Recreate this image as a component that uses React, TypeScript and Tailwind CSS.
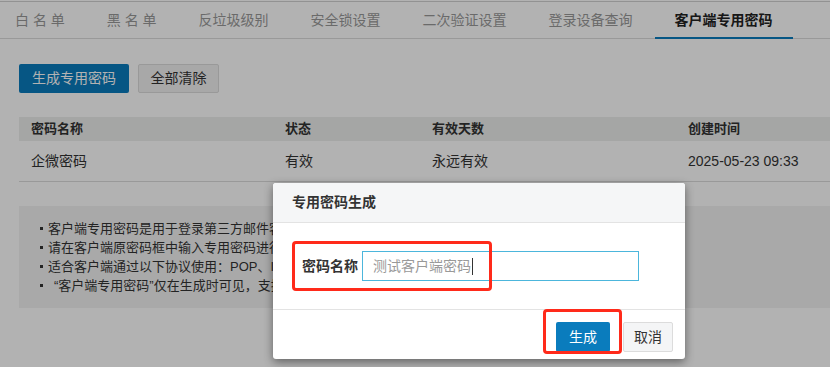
const TABS = ["白 名 单", "黑 名 单", "反垃圾级别", "安全锁设置", "二次验证设置", "登录设备查询", "客户端专用密码"];

const NOTES = [
  "客户端专用密码是用于登录第三方邮件客户端的专用密码；",
  "请在客户端原密码框中输入专用密码进行登录；",
  "适合客户端通过以下协议使用：POP、IMAP、SMTP；",
  "“客户端专用密码”仅在生成时可见，支持删除。",
];

function Tabs() {
  return (
    <div className="mt-px flex h-[38px] border-y border-[#dcdcdc] border-t-[#d2d2d2] pl-[15px] gap-[42px]">
      {TABS.map((t, i) => {
        const active = i === TABS.length - 1;
        return (
          <div
            key={t}
            className={
              active
                ? "relative flex items-center text-[14px] font-bold text-[#222]"
                : "flex items-center text-[14px] text-[#999]"
            }
          >
            {t}
            {active && <div className="absolute -left-5 -right-5 bottom-[-1px] h-[2px] bg-[#0a7cbd]" />}
          </div>
        );
      })}
    </div>
  );
}

function Table() {
  return (
    <div className="mt-[24px] text-[13px] text-[#333]">
      <div className="grid h-6 grid-cols-[254px_147px_256px_1fr] items-center bg-[#eceeec] font-bold">
        <div className="pl-3">密码名称</div>
        <div className="pl-3">状态</div>
        <div className="pl-3">有效天数</div>
        <div className="pl-3">创建时间</div>
      </div>
      <div className="grid h-[41px] grid-cols-[254px_147px_256px_1fr] items-center border-b border-[#dcdcdc] text-[14px]">
        <div className="pl-3">企微密码</div>
        <div className="pl-3">有效</div>
        <div className="pl-3">永远有效</div>
        <div className="pl-3">2025-05-23 09:33</div>
      </div>
    </div>
  );
}

function Notes() {
  return (
    <div className="mt-6 bg-[#f3f3f3] pb-[13px] pt-[13px] pl-[21px] text-[13px] leading-[19px] text-[#333]">
      {NOTES.map((n, i) => (
        <div key={n} className="flex items-center">
          <span className="mr-[5px] h-[3px] w-[3px] bg-[#333]" />
          <span className={i === 3 ? "ml-[6px]" : ""}>{n}</span>
        </div>
      ))}
    </div>
  );
}

function Modal() {
  return (
    <div className="absolute left-[273px] top-[183px] w-[412px] rounded-[3px] bg-white shadow-[0_3px_10px_rgba(0,0,0,0.45)]">
      <div className="flex h-[40px] items-center rounded-t-[3px] border-b border-[#e3e3e3] bg-[#f5f6f7] pl-[19px] text-[14px] font-bold text-[#333]">
        专用密码生成
      </div>
      <div className="relative flex h-[86px] items-center pl-[29px]">
        <span className="mr-[4px] text-[14px] font-bold text-[#333]">密码名称</span>
        <div className="flex h-[30px] w-[277px] items-center border border-[#4cb6dc] pl-[10px] text-[14px] text-[#999]">
          测试客户端密码
          <span className="ml-px h-[17px] w-px bg-[#333]" />
        </div>
        <div className="pointer-events-none absolute left-[19px] top-[18px] h-[50px] w-[200px] rounded-[4px] border-[3px] border-[#ff2a1a]" />
      </div>
      <div className="relative flex justify-end gap-[13px] border-t border-[#e3e3e3] pb-[7px] pr-[12px] pt-[12px]">
        <button className="h-[30px] w-[54px] rounded-[2px] bg-[#0a7cbd] text-[14px] text-white">生成</button>
        <button className="h-[30px] w-[50px] rounded-[2px] border border-[#dcdcdc] bg-[#f4f5f6] text-[14px] text-[#333]">
          取消
        </button>
        <div className="pointer-events-none absolute left-[270px] top-[-1px] h-[45px] w-[79px] rounded-[4px] border-[3px] border-[#ff2a1a]" />
      </div>
    </div>
  );
}

export default function App() {
  return (
    <div
      className="relative h-[367px] w-[830px] overflow-hidden bg-white"
      style={{ fontFamily: '"Liberation Sans", "Noto Sans CJK SC", sans-serif' }}
    >
      <Tabs />
      <div className="pl-[19px]">
        <div className="mt-[25px] flex gap-[9px]">
          <button className="h-[29px] w-[110px] rounded-[2px] bg-[#0a7cbd] text-[14px] text-white">生成专用密码</button>
          <button className="h-[29px] w-[81px] rounded-[2px] border border-[#dcdcdc] bg-[#f1f1f1] text-[14px] text-[#333]">
            全部清除
          </button>
        </div>
        <Table />
        <Notes />
      </div>
      <div className="absolute inset-0 bg-black/30" />
      <Modal />
    </div>
  );
}
